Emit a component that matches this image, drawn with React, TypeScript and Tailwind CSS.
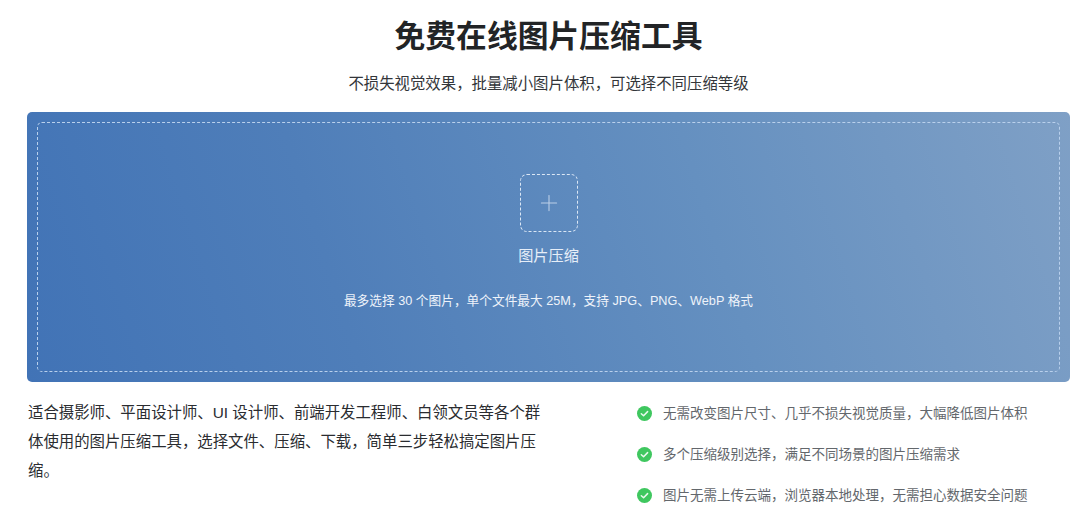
import { Plus } from "lucide-react";

const features = [
  "无需改变图片尺寸、几乎不损失视觉质量，大幅降低图片体积",
  "多个压缩级别选择，满足不同场景的图片压缩需求",
  "图片无需上传云端，浏览器本地处理，无需担心数据安全问题",
];

function CheckIcon() {
  return (
    <svg viewBox="0 0 16 16" className="h-[15px] w-[15px] shrink-0">
      <circle cx="8" cy="8" r="8" fill="#3fc75f" />
      <path d="M4.6 8.2l2.4 2.2 4.3-4.4" fill="none" stroke="#e9f9ed" strokeWidth="1.6" strokeLinecap="round" strokeLinejoin="round" />
    </svg>
  );
}

export default function App() {
  return (
    <div className="h-[517px] w-[1080px] overflow-hidden bg-white pl-[27px] font-['Liberation_Sans','Noto_Sans_CJK_SC',sans-serif]">
      <div className="w-[1043px]">
        <h1 className="pt-[15px] text-center text-[30.8px] leading-[44px] font-bold text-[#222426]">
          免费在线图片压缩工具
        </h1>
        <p className="mt-[13px] text-center text-[15.4px] leading-[24px] text-[#33363a]">
          不损失视觉效果，批量减小图片体积，可选择不同压缩等级
        </p>

        <div className="mt-[16px] h-[270px] rounded-[5px] bg-[linear-gradient(72deg,#4173b6_0%,#4f7eb9_30%,#6590c0_65%,#7fa0c6_100%)] p-[10px]">
          <div className="flex h-full flex-col items-center rounded-[5px] border border-dashed border-[#b9d0ec]">
            <div className="mt-[51px] flex h-[58px] w-[58px] items-center justify-center rounded-[7px] border border-dashed border-[#dbe7f5]">
              <Plus className="h-[26px] w-[26px] text-[#bcd0e8]" strokeWidth={1} />
            </div>
            <div className="mt-[13px] text-[15.2px] leading-[22px] text-[#e6eef8]">图片压缩</div>
            <div className="mt-[25px] text-[12.7px] leading-[18px] whitespace-pre text-[#eef3fa]">
              最多选择 30 个图片，单个文件最大 25M，支持 JPG、PNG、WebP 格式
            </div>
          </div>
        </div>

        <div className="mt-[16px] flex pl-[1px]">
          <p className="w-[520px] text-[15.4px] leading-[29px] text-[#2a2c30]">
            适合摄影师、平面设计师、UI 设计师、前端开发工程师、白领文员等各个群体使用的图片压缩工具，选择文件、压缩、下载，简单三步轻松搞定图片压缩。
          </p>
          <ul className="ml-[89px] flex flex-col gap-[20px] pt-[5px]">
            {features.map((item) => (
              <li key={item} className="flex items-center gap-[11px] text-[13.5px] leading-[21px] text-[#63676c]">
                <CheckIcon />
                {item}
              </li>
            ))}
          </ul>
        </div>
      </div>
    </div>
  );
}
